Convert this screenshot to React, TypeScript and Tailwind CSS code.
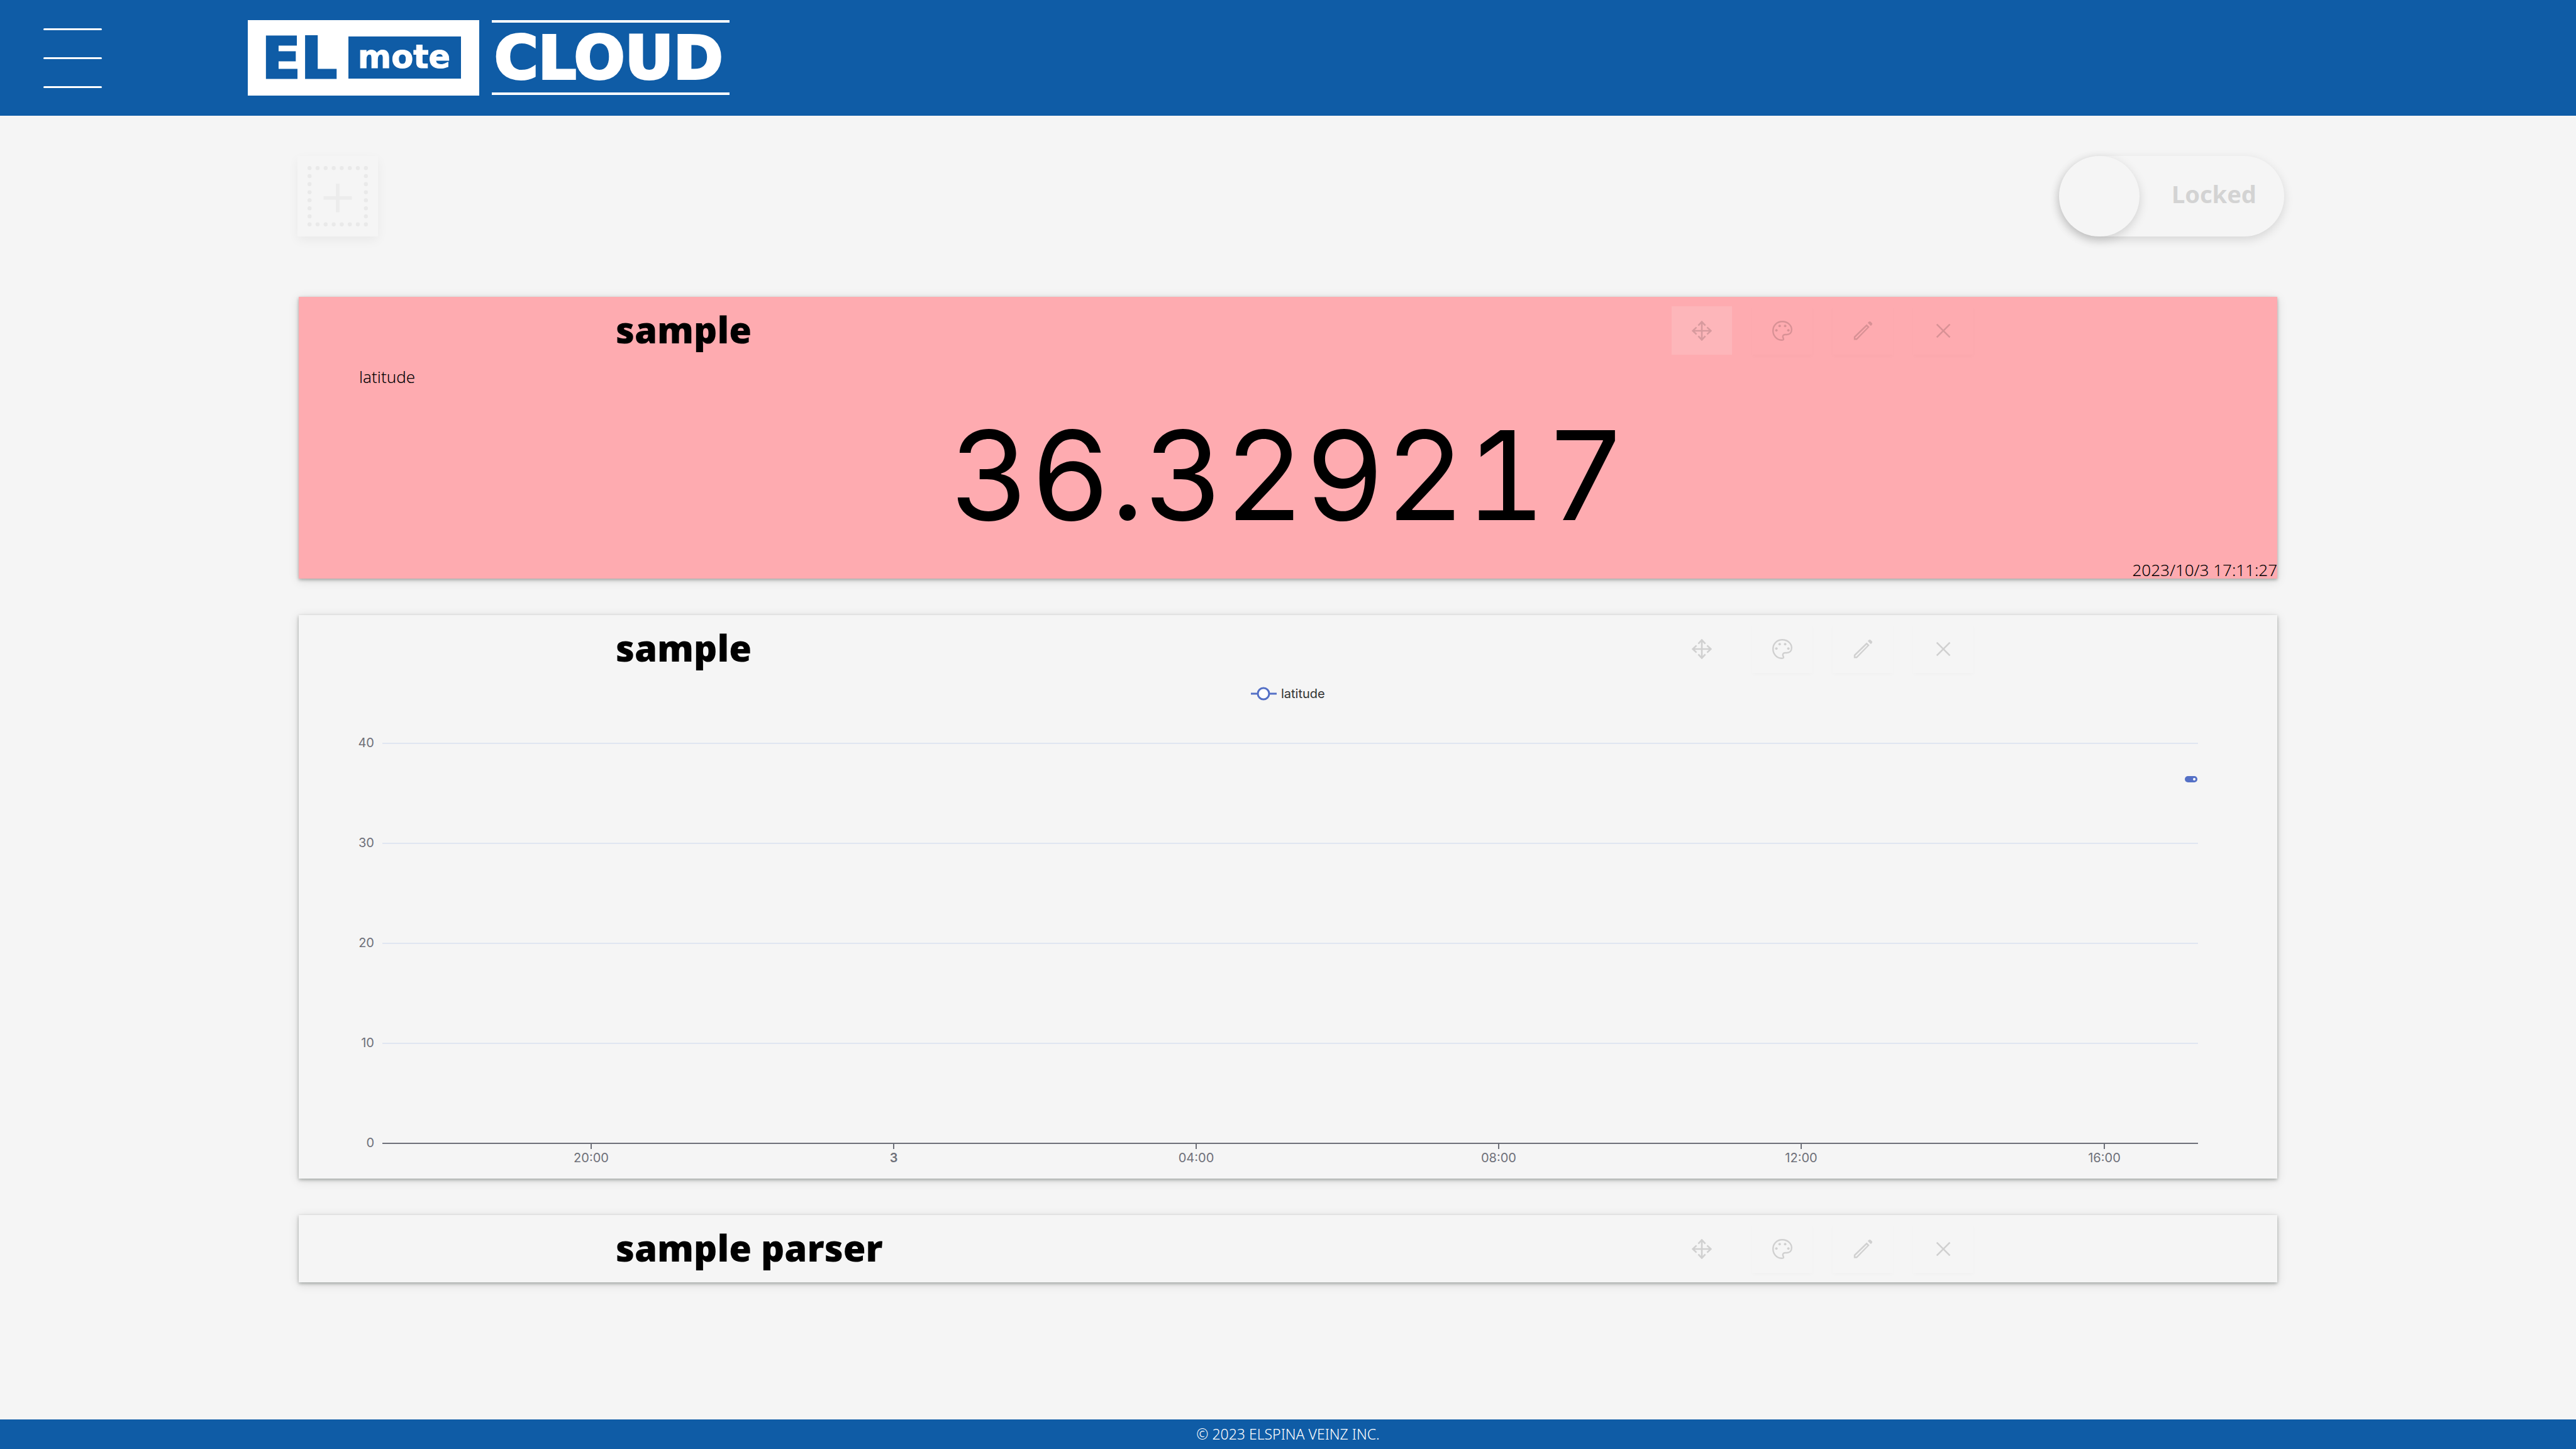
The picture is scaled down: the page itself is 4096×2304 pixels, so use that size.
import type { ReactNode } from "react";

const GRID_LEFT = 133;
const GRID_RIGHT = 3020;
const AXIS_Y = 733;

const yTicks = [
  { label: "40", y: 97 },
  { label: "30", y: 256 },
  { label: "20", y: 415 },
  { label: "10", y: 574 },
  { label: "0", y: 733 },
];

const xTicks = [
  { label: "20:00", x: 465 },
  { label: "3", x: 946, bold: true },
  { label: "04:00", x: 1427 },
  { label: "08:00", x: 1908 },
  { label: "12:00", x: 2389 },
  { label: "16:00", x: 2871 },
];

const MoveIcon = () => (
  <svg viewBox="0 0 40 40" className="size-8" fill="none" stroke="currentColor" strokeWidth="3.3">
    <path d="M20 2V38M2 20H38M13 9.5L20 2L27 9.5M13 30.5L20 38L27 30.5M9.5 13L2 20L9.5 27M30.5 13L38 20L30.5 27" />
  </svg>
);

const PaletteIcon = () => (
  <svg viewBox="0 0 40 40" className="size-8">
    <path
      d="M18.5 38.5C8 38 1.5 29 1.5 20C1.5 9 9.5 1.5 20 1.5C30.5 1.5 38.5 9 38.5 17.5C38.5 24 34.5 27.5 29 27.5H26C22.5 27.5 20.5 29.5 21 32.5L22.3 35.5C23 37.5 22 38.5 18.5 38.5Z"
      fill="none"
      stroke="currentColor"
      strokeWidth="3"
    />
    <g fill="currentColor">
      <circle cx="14.7" cy="10.3" r="2.5" />
      <circle cx="25.6" cy="10.3" r="2.5" />
      <circle cx="8.2" cy="19" r="2.5" />
      <circle cx="32" cy="19" r="2.5" />
    </g>
  </svg>
);

const PencilIcon = () => (
  <svg viewBox="0 0 40 40" className="size-8" fill="currentColor" fillRule="evenodd">
    <path d="M27.6 6.8L33.3 12.4L8.3 38H2.2V31.5ZM27.5 11.5L5.2 33V35H7.2L29.2 12.8Z" />
    <path d="M29.7 4.2L32 2C33 1 34.5 1 35.5 2L38 4.5C39.2 5.7 39.2 7 38 8.2L36 10.3Z" />
  </svg>
);

const CloseIcon = () => (
  <svg viewBox="0 0 40 40" className="size-8" fill="none" stroke="currentColor" strokeWidth="3.3">
    <path d="M7 7L33 33M33 7L7 33" />
  </svg>
);

const actions = [
  { name: "Move", icon: MoveIcon, style: "bg-[#f5f5f5]/15" },
  { name: "Color", icon: PaletteIcon, style: "shadow-[0_3px_6px_rgba(0,0,0,0.015)]" },
  { name: "Edit", icon: PencilIcon, style: "shadow-[0_3px_6px_rgba(0,0,0,0.015)]" },
  { name: "Delete", icon: CloseIcon, style: "shadow-[0_3px_6px_rgba(0,0,0,0.015)]" },
];

function Widget({ title, className = "", children }: { title: string; className?: string; children?: ReactNode }) {
  return (
    <section className={`shadow-[0_3px_16px_rgba(0,0,0,0.12),0_2px_5px_rgba(0,20,10,0.3)] ${className}`}>
      <div className="flex h-[107px] items-center justify-between pl-[504px] pr-[483px]">
        <h2 className="pb-1 text-[58px] leading-none font-black text-black">{title}</h2>
        <div className="flex gap-8">
          {actions.map((action) => (
            <button
              key={action.name}
              type="button"
              aria-label={action.name}
              className={`flex h-[77px] w-24 items-center justify-center text-black/15 ${action.style}`}
            >
              <action.icon />
            </button>
          ))}
        </div>
      </div>
      {children}
    </section>
  );
}

function Chart() {
  return (
    <svg viewBox="0 0 3146 789" className="block w-full" fontFamily="Inter, sans-serif" fontSize="20">
      {/* legend */}
      <path d="M1514 18H1555" stroke="#5470c6" strokeWidth="3" />
      <circle cx="1534" cy="18" r="9" fill="#fff" stroke="#5470c6" strokeWidth="3" />
      <text x="1562" y="25" fill="#333">latitude</text>

      {yTicks.map((tick) => (
        <g key={tick.label}>
          {tick.y !== AXIS_Y && (
            <path d={`M${GRID_LEFT} ${tick.y}H${GRID_RIGHT}`} stroke="#e0e6f1" strokeWidth="2" />
          )}
          <text x="120" y={tick.y + 6} textAnchor="end" fill="#6e7079">{tick.label}</text>
        </g>
      ))}

      <path d={`M${GRID_LEFT} ${AXIS_Y}H${GRID_RIGHT}`} stroke="#6e7079" strokeWidth="2" />
      {xTicks.map((tick) => (
        <g key={tick.label}>
          <path d={`M${tick.x} ${AXIS_Y}v9`} stroke="#6e7079" strokeWidth="2" />
          <text x={tick.x} y="763" textAnchor="middle" fill="#6e7079" fontWeight={tick.bold ? 600 : 400}>
            {tick.label}
          </text>
        </g>
      ))}

      {/* latest samples overlap at the right edge */}
      <rect x="2999" y="149" width="20" height="10" rx="5" fill="#5470c6" />
      <circle cx="3014" cy="154" r="2" fill="#fff" />
    </svg>
  );
}

function Logo() {
  return (
    <svg viewBox="0 0 766 120" className="h-[120px] w-[766px]" fontFamily="DejaVu Sans, sans-serif" fontWeight="700">
      <rect width="368" height="120" fill="#fff" />
      <rect x="160" y="26" width="179" height="67" fill="#0f5ca6" />
      <path d="M388 2H766M388 117H766" stroke="#fff" strokeWidth="4" />
      <text x="22" y="92" fontSize="91" fill="#0f5ca6" stroke="#0f5ca6" strokeWidth="3">EL</text>
      <text x="175" y="76" fontSize="51" fill="#fff" stroke="#fff" strokeWidth="1">mote</text>
      <text x="392" y="93" fontSize="95" fill="#fff" stroke="#fff" strokeWidth="4">CLOUD</text>
    </svg>
  );
}

function App() {
  return (
    <div className="flex min-h-screen flex-col bg-[#f5f5f5] font-['Noto_Sans',sans-serif] text-black">
      <header className="flex h-[184px] items-center bg-[#0f5ca6] pl-[69px]">
        <button type="button" aria-label="Menu" className="flex w-[93px] flex-col gap-[43px]">
          <span className="h-[3px] w-full rounded-full bg-white" />
          <span className="h-[3px] w-full rounded-full bg-white" />
          <span className="h-[3px] w-full rounded-full bg-white" />
        </button>
        <a href="#" className="ml-[232px]">
          <Logo />
        </a>
      </header>

      <main className="grow">
        <div className="flex items-center justify-between pt-16 pr-[464px] pl-[473px]">
          <button
            type="button"
            aria-label="Add widget"
            className="flex size-32 items-center justify-center shadow-[0_6px_16px_rgba(0,0,0,0.05)]"
          >
            <svg viewBox="0 0 120 120" className="size-24" fill="none">
              <rect x="4" y="4" width="112" height="112" stroke="#e9e9e9" strokeWidth="8" strokeLinecap="round" strokeDasharray="0 16" />
              <path d="M60 35V92M32 63.5H88" stroke="#ececec" strokeWidth="7" />
            </svg>
          </button>
          <label className="flex h-32 w-[358px] items-center rounded-full shadow-[0_5px_16px_rgba(0,0,0,0.13)]">
            <input
              type="checkbox"
              className="size-32 shrink-0 appearance-none rounded-full shadow-[0_5px_16px_rgba(0,0,0,0.15)]"
            />
            <span className="pb-2 pl-[51px] text-[38px] leading-none font-bold text-[#d3d3d3]">Locked</span>
          </label>
        </div>

        <div className="mx-[475px] mt-24 mb-24 flex flex-col gap-[58px]">
          <Widget title="sample" className="bg-[#feabb0]">
            <p className="pt-1.5 pl-24 text-[26px] leading-7 font-light">latitude</p>
            <p className="pt-1.5 text-center font-['Inter',sans-serif] text-[197px] leading-[273px] tabular-nums">36.329217</p>
            <p className="text-right text-[26px] leading-7 font-light">2023/10/3 17:11:27</p>
          </Widget>
          <Widget title="sample">
            <Chart />
          </Widget>
          <Widget title="sample parser" />
        </div>
      </main>

      <footer className="bg-[#0f5ca6] text-center text-[23px] leading-[47px] font-light text-white">
        © 2023 ELSPINA VEINZ INC.
      </footer>
    </div>
  );
}

export default App;
